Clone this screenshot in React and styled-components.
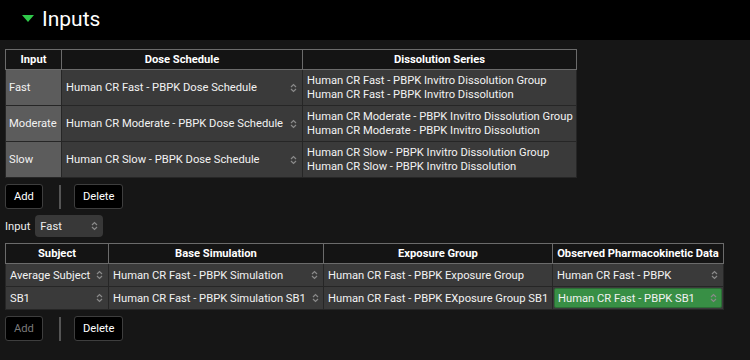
import React from 'react';
import styled, { createGlobalStyle } from 'styled-components';

const GlobalStyle = createGlobalStyle`
    html, body {
        margin: 0;
        padding: 0;
        background: #161616;
        font-family: Roboto, "Liberation Sans", sans-serif;
        color: #eee;
    }
`;

const doseRows = [
    { input: 'Fast', dose: 'Human CR Fast - PBPK Dose Schedule', series: ['Human CR Fast - PBPK Invitro Dissolution Group', 'Human CR Fast - PBPK Invitro Dissolution'] },
    { input: 'Moderate', dose: 'Human CR Moderate - PBPK Dose Schedule', series: ['Human CR Moderate - PBPK Invitro Dissolution Group', 'Human CR Moderate - PBPK Invitro Dissolution'] },
    { input: 'Slow', dose: 'Human CR Slow - PBPK Dose Schedule', series: ['Human CR Slow - PBPK Invitro Dissolution Group', 'Human CR Slow - PBPK Invitro Dissolution'] },
];

const subjectRows = [
    { subject: 'Average Subject', sim: 'Human CR Fast - PBPK Simulation', exposure: 'Human CR Fast - PBPK Exposure Group', observed: 'Human CR Fast - PBPK', selected: false },
    { subject: 'SB1', sim: 'Human CR Fast - PBPK Simulation SB1', exposure: 'Human CR Fast - PBPK EXposure Group SB1', observed: 'Human CR Fast - PBPK SB1', selected: true },
];

const Spinner = () => (
    <SpinnerIcon width="7" height="10" viewBox="0 0 7 10">
        <path d="M1 4 L3.5 1.5 L6 4" fill="none" stroke="#8a8a8a" strokeWidth="1.2" />
        <path d="M1 6 L3.5 8.5 L6 6" fill="none" stroke="#8a8a8a" strokeWidth="1.2" />
    </SpinnerIcon>
);

const SelectCell = ({ children, selected }) => (
    <SelectInner $selected={selected}>
        <span>{children}</span>
        <Spinner />
    </SelectInner>
);

const Toolbar = ({ addDisabled }) => (
    <ButtonRow>
        <Button disabled={addDisabled}>Add</Button>
        <Divider />
        <Button>Delete</Button>
    </ButtonRow>
);

const App = () => {
    return (
        <>
            <GlobalStyle />
            <Header>
                <Triangle />
                <Title>Inputs</Title>
            </Header>
            <Content>
                <Table style={{ width: 571 }}>
                    <colgroup>
                        <col style={{ width: 56 }} />
                        <col style={{ width: 241 }} />
                        <col style={{ width: 274 }} />
                    </colgroup>
                    <thead>
                        <tr>
                            <Th>Input</Th>
                            <Th>Dose Schedule</Th>
                            <Th>Dissolution Series</Th>
                        </tr>
                    </thead>
                    <tbody>
                        {doseRows.map(row => (
                            <tr key={row.input}>
                                <LabelCell>{row.input}</LabelCell>
                                <Td $tall><SelectCell>{row.dose}</SelectCell></Td>
                                <Td $tall>
                                    {row.series.map(s => <SeriesLine key={s}>{s}</SeriesLine>)}
                                </Td>
                            </tr>
                        ))}
                    </tbody>
                </Table>

                <Toolbar />

                <InputRow>
                    <span>Input</span>
                    <SmallSelect>
                        <span>Fast</span>
                        <Spinner />
                    </SmallSelect>
                </InputRow>

                <Table style={{ width: 718 }}>
                    <colgroup>
                        <col style={{ width: 103 }} />
                        <col style={{ width: 215 }} />
                        <col style={{ width: 229 }} />
                        <col style={{ width: 171 }} />
                    </colgroup>
                    <thead>
                        <tr>
                            <Th>Subject</Th>
                            <Th>Base Simulation</Th>
                            <Th>Exposure Group</Th>
                            <Th>Observed Pharmacokinetic Data</Th>
                        </tr>
                    </thead>
                    <tbody>
                        {subjectRows.map(row => (
                            <tr key={row.subject}>
                                <Td><SelectCell>{row.subject}</SelectCell></Td>
                                <Td><SelectCell>{row.sim}</SelectCell></Td>
                                <Td>{row.exposure}</Td>
                                <Td $boxed>
                                    <SelectCell selected={row.selected}>{row.observed}</SelectCell>
                                </Td>
                            </tr>
                        ))}
                    </tbody>
                </Table>

                <Toolbar addDisabled />
            </Content>
        </>
    );
};

export default App;

const Header = styled.div`
    height: 40px;
    background: #000;
    display: flex;
    align-items: center;
    padding-left: 22px;
    box-sizing: border-box;
`;

const Triangle = styled.div`
    width: 0;
    height: 0;
    border-left: 6px solid transparent;
    border-right: 6px solid transparent;
    border-top: 7px solid #2fc94a;
    margin-right: 8px;
    margin-top: -3px;
`;

const Title = styled.h1`
    margin: 0;
    font-size: 21px;
    font-weight: 400;
    color: #fff;
    margin-top: -2px;
`;

const Content = styled.div`
    padding: 9px 5px 0 5px;
    display: flex;
    flex-direction: column;
    align-items: flex-start;
`;

const Table = styled.table`
    border-collapse: collapse;
    table-layout: fixed;
    font-size: 11.2px;
`;

const Th = styled.th`
    background: #141414;
    border: 1px solid #6b6b6b;
    height: 19px;
    padding: 0 3px;
    font-weight: 700;
    font-size: 11.2px;
    color: #fff;
    text-align: center;
    white-space: nowrap;
    overflow: hidden;
`;

const Td = styled.td`
    background: #3a3a3a;
    border: 1px solid #262626;
    height: ${props => props.$tall ? '35px' : props.$boxed ? '20px' : '22px'};
    padding: ${props => props.$boxed ? '1px' : '0 4px'};
    color: #f2f2f2;
    white-space: nowrap;
    overflow: hidden;
    vertical-align: middle;
`;

const LabelCell = styled(Td)`
    background: #5c5c5c;
    height: 35px;
    padding: 0 3px;
`;

const SeriesLine = styled.div`
    line-height: 14px;
`;

const SelectInner = styled.div`
    display: flex;
    align-items: center;
    justify-content: space-between;
    gap: 6px;
    padding-right: 1px;
    ${props => props.$selected !== undefined && `
        height: 20px;
        box-sizing: border-box;
        padding: 0 4px 0 3px;
        border-radius: 2px;
    `}
    ${props => props.$selected && `
        background: #388f45;
        border: 1px solid #2c6e36;
    `}
`;

const SpinnerIcon = styled.svg`
    flex-shrink: 0;
`;

const ButtonRow = styled.div`
    display: flex;
    align-items: center;
    margin-top: 6px;
    height: 25px;
`;

const Button = styled.button`
    height: 25px;
    padding: 0 8px;
    background: #000;
    border: 1px solid #3e3e3e;
    border-radius: 3px;
    color: ${props => props.disabled ? '#7a7a7a' : '#fff'};
    font-family: Roboto, "Liberation Sans", sans-serif;
    font-size: 11.2px;
`;

const Divider = styled.div`
    width: 2px;
    height: 24px;
    background: #555;
    margin: 0 13px 0 16px;
`;

const InputRow = styled.div`
    display: flex;
    align-items: center;
    gap: 5px;
    margin-top: 6px;
    margin-bottom: 6px;
    font-size: 11.2px;
`;

const SmallSelect = styled.div`
    width: 68px;
    height: 22px;
    box-sizing: border-box;
    background: #383838;
    border-radius: 4px;
    padding: 0 5px;
    display: flex;
    align-items: center;
    justify-content: space-between;
    font-size: 11.2px;
`;
